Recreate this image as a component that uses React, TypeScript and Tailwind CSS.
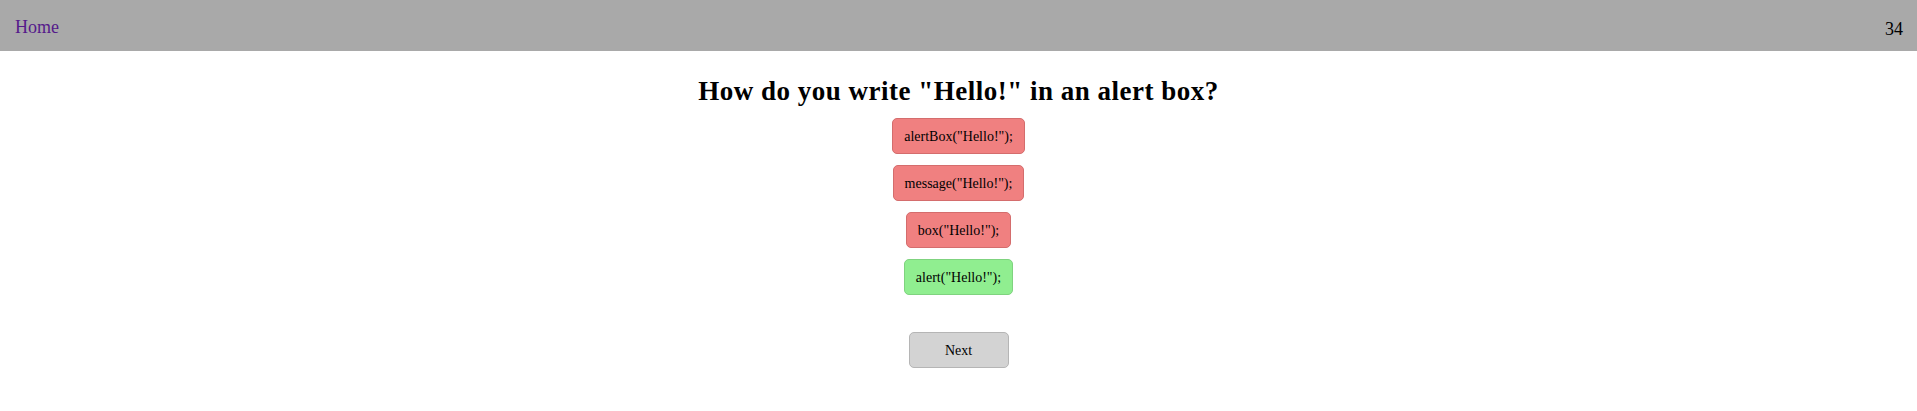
import React from "react";

const options = [
  { label: 'alertBox("Hello!");', correct: false },
  { label: 'message("Hello!");', correct: false },
  { label: 'box("Hello!");', correct: false },
  { label: 'alert("Hello!");', correct: true },
];

export default function App() {
  return (
    <div className="min-h-screen bg-white font-['Liberation_Serif',serif] text-black">
      {/* Top bar */}
      <div className="flex h-[51px] items-start justify-between bg-[#a9a9a9] pl-[15px] pr-[14px]">
        <a href="#" className="mt-[18px] text-[18px] leading-none text-[#551a8b]">
          Home
        </a>
        <span className="mt-[20px] text-[18px] leading-none">34</span>
      </div>

      {/* Question */}
      <div className="flex flex-col items-center">
        <h2 className="mt-[26px] text-[27px] font-bold leading-[28px] tracking-[0.5px]">
          How do you write "Hello!" in an alert box?
        </h2>

        <div className="mt-[13px] flex flex-col items-center gap-[11px]">
          {options.map((o) => (
            <button
              key={o.label}
              className={`h-[36px] rounded-[5px] border px-[11px] text-[14px] ${
                o.correct
                  ? "border-[#7fd37f] bg-[#90ee90]"
                  : "border-[#d46d6d] bg-[#f08080]"
              }`}
            >
              {o.label}
            </button>
          ))}
        </div>

        <button className="mt-[37px] h-[36px] w-[100px] rounded-[5px] border border-[#b5b5b5] bg-[#d3d3d3] text-[14px]">
          Next
        </button>
      </div>
    </div>
  );
}
